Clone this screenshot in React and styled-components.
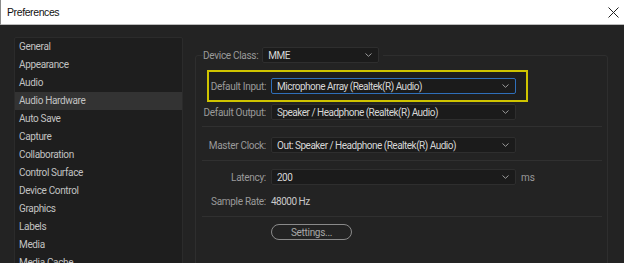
import React from 'react'
import styled, { createGlobalStyle } from 'styled-components'

const GlobalStyle = createGlobalStyle`
  html, body { margin:0; padding:0; background:#232323; }
  * { box-sizing:border-box; }
`

const Window = styled.div`
  width:624px;
  height:263px;
  overflow:hidden;
  background:#232323;
  display:flex;
  flex-direction:column;
  font-family:Roboto, "Noto Sans", sans-serif;
`

const TitleBar = styled.div`
  height:25px;
  flex:none;
  background:#fff;
  border-left:1px solid #8a8a8a;
  border-bottom:1px solid #bcbcbc;
  display:flex;
  align-items:center;
  justify-content:space-between;
  padding:0 5px 0 6px;
  span{
    font-family:"Liberation Sans", Arial, sans-serif;
    font-size:10.5px;
    letter-spacing:-0.4px;
    color:#111;
  }
`

const Body = styled.div`
  flex:1;
  display:flex;
  padding:12px 16px 0 14px;
  min-height:0;
`

const Sidebar = styled.div`
  width:169px;
  flex:none;
  background:#1e1e1e;
  border:1px solid #2b2b2b;
  border-radius:2px;
  align-self:stretch;
  margin-bottom:-20px;
`

const Item = styled.div`
  height:18px;
  line-height:18px;
  padding-left:4px;
  font-size:10px;
  letter-spacing:-0.35px;
  color:#c2c2c2;
  background:${p => (p.$active ? '#333333' : 'transparent')};
`

const Content = styled.div`
  flex:1;
  margin-left:12px;
  margin-top:10px;
`

const Group = styled.fieldset`
  margin:0;
  padding:0 0 40px 0;
  border:1px solid #2e2e2e;
  border-radius:3px;
  min-width:0;
`

const Legend = styled.legend`
  margin-left:7px;
  padding:0 4px 0 0;
  display:flex;
  align-items:center;
  gap:4px;
`

const Label = styled.div`
  font-size:10px;
  letter-spacing:-0.3px;
  color:#9a9a9a;
  white-space:nowrap;
  text-align:right;
  width:${p => (p.$w ? `${p.$w}px` : 'auto')};
  flex:none;
`

const Row = styled.div`
  display:flex;
  align-items:center;
  gap:5px;
  height:16px;
  margin-top:${p => p.$mt || 0}px;
`

const Highlight = styled.div`
  margin:7px 0 0 11px;
  width:321px;
  border:2px solid #cfc400;
  background:#1e1e1e;
  padding:6px 0;
`

const Select = styled.div`
  width:${p => p.$w}px;
  height:16px;
  flex:none;
  background:#1b1b1b;
  border:1px solid ${p => (p.$focus ? '#2f6fb9' : '#2e2e2e')};
  border-radius:2px;
  display:flex;
  align-items:center;
  justify-content:space-between;
  padding:0 6px 0 5px;
  font-size:10px;
  letter-spacing:-0.5px;
  color:#d6d6d6;
  white-space:nowrap;
`

const Value = styled.div`
  font-size:10px;
  letter-spacing:-0.5px;
  color:#c8c8c8;
`

const Unit = styled.div`
  font-size:10px;
  color:#9a9a9a;
`

const Separator = styled.div`
  height:1px;
  background:#303030;
  margin:${p => p.$mt}px 5px 0 6px;
`

const Button = styled.div`
  margin:7px 0 0 75px;
  width:81px;
  height:16px;
  border:1px solid #8a8a8a;
  border-radius:8px;
  display:flex;
  align-items:center;
  justify-content:center;
  font-size:10px;
  letter-spacing:-0.3px;
  color:#a8a8a8;
`

const Chevron = () => (
  <svg width="7" height="4" viewBox="0 0 7 4">
    <polyline points="0.5,0.5 3.5,3.3 6.5,0.5" fill="none" stroke="#9c9c9c" strokeWidth="1" />
  </svg>
)

const CloseIcon = () => (
  <svg width="11" height="11" viewBox="0 0 11 11">
    <path d="M0.5 0.5 L10.5 10.5 M10.5 0.5 L0.5 10.5" stroke="#222" strokeWidth="1" />
  </svg>
)

const Dropdown = ({ w, focus, children }) => (
  <Select $w={w} $focus={focus}>
    <span>{children}</span>
    <Chevron />
  </Select>
)

const items = [
  'General', 'Appearance', 'Audio', 'Audio Hardware', 'Auto Save', 'Capture',
  'Collaboration', 'Control Surface', 'Device Control', 'Graphics', 'Labels',
  'Media', 'Media Cache',
]

export default function App() {
  return (
    <>
      <GlobalStyle />
      <Window>
        <TitleBar>
          <span>Preferences</span>
          <CloseIcon />
        </TitleBar>
        <Body>
          <Sidebar>
            {items.map(it => (
              <Item key={it} $active={it === 'Audio Hardware'}>{it}</Item>
            ))}
          </Sidebar>
          <Content>
            <Group>
              <Legend>
                <Label>Device Class:</Label>
                <Dropdown w={117}>MME</Dropdown>
              </Legend>
              <Highlight>
                <Row>
                  <Label $w={57}>Default Input:</Label>
                  <Dropdown w={245} focus>Microphone Array (Realtek(R) Audio)</Dropdown>
                </Row>
              </Highlight>
              <Row $mt={2}>
                <Label $w={70}>Default Output:</Label>
                <Dropdown w={245}>Speaker / Headphone (Realtek(R) Audio)</Dropdown>
              </Row>
              <Separator $mt={6} />
              <Row $mt={10}>
                <Label $w={70}>Master Clock:</Label>
                <Dropdown w={245}>Out: Speaker / Headphone (Realtek(R) Audio)</Dropdown>
              </Row>
              <Separator $mt={7} />
              <Row $mt={8}>
                <Label $w={70}>Latency:</Label>
                <Dropdown w={245}>200</Dropdown>
                <Unit>ms</Unit>
              </Row>
              <Row $mt={8}>
                <Label $w={70}>Sample Rate:</Label>
                <Value>48000 Hz</Value>
              </Row>
              <Separator $mt={7} />
              <Button>Settings...</Button>
            </Group>
          </Content>
        </Body>
      </Window>
    </>
  )
}
